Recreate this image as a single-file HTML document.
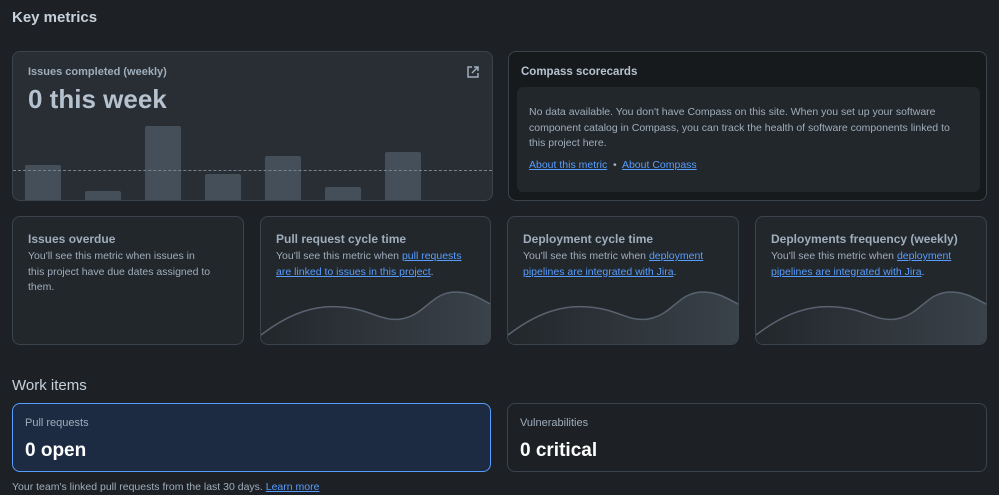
<!DOCTYPE html>
<html><head><style>
*{box-sizing:border-box;margin:0;padding:0}
body{width:999px;height:495px;background:#1d2125;font-family:"Liberation Sans",sans-serif;color:#b6c2cf;position:relative;overflow:hidden}
.a{position:absolute}
.card{position:absolute;border:1px solid #3b434c;border-radius:8px;background:#22272b;overflow:hidden}
h2{position:absolute;font-size:15px;font-weight:bold;color:#c7d1db}
.t{font-size:12px;font-weight:bold;color:#9fadbc;position:absolute}
.p{font-size:10.5px;line-height:15.5px;color:#9fadbc;position:absolute}
a{color:#579dff;text-decoration:underline}
.bar{position:absolute;background:#454f59;width:36px;bottom:0;border-radius:2px 2px 0 0}
</style></head><body>
<h2 style="left:12px;top:9px">Key metrics</h2>

<div class="card" style="left:12px;top:51px;width:481px;height:150px;background:#282e33">
 <div class="a" style="left:15px;top:14px;font-size:11px;font-weight:bold;color:#9fadbc">Issues completed (weekly)</div>
 <div class="a" style="left:15px;top:32px;font-size:26px;font-weight:bold;color:#b6c2cf">0 this week</div>
 <svg class="a" style="left:453px;top:13px" width="14" height="14" viewBox="0 0 14 14" fill="none" stroke="#9fadbc" stroke-width="1.5"><path d="M6 2H2v10h10V8M8 2h4v4M12 2L6 8"/></svg>
 <div class="bar" style="left:12px;height:35px"></div>
 <div class="bar" style="left:72px;height:9px"></div>
 <div class="bar" style="left:132px;height:74px"></div>
 <div class="bar" style="left:192px;height:26px"></div>
 <div class="bar" style="left:252px;height:44px"></div>
 <div class="bar" style="left:312px;height:13px"></div>
 <div class="bar" style="left:372px;height:48px"></div>
 <div class="a" style="left:0;right:0;top:118px;border-top:1px dashed #738496"></div>
</div>

<div class="card" style="left:508px;top:51px;width:479px;height:150px;background:#161a1d">
 <div class="t" style="left:12px;top:14px;font-size:11.5px;color:#b6c2cf">Compass scorecards</div>
 <div class="a" style="left:8px;top:35px;width:463px;height:105px;background:#22272b;border-radius:6px">
  <div class="p" style="left:12px;top:18px;width:440px">No data available. You don't have Compass on this site. When you set up your software component catalog in Compass, you can track the health of software components linked to this project here.</div>
  <div class="p" style="left:12px;top:71px"><a>About this metric</a> &nbsp;•&nbsp; <a>About Compass</a></div>
 </div>
</div>

<div class="card" style="left:12px;top:216px;width:232px;height:129px">
 <div class="t" style="left:15px;top:15px">Issues overdue</div>
 <div class="p" style="left:15px;top:32px;width:185px">You'll see this metric when issues in this project have due dates assigned to them.</div>
</div>

<div class="card" style="left:260px;top:216px;width:231px;height:129px">
 <div class="t" style="left:15px;top:15px">Pull request cycle time</div>
 <div class="p" style="left:15px;top:32px;width:195px">You'll see this metric when <a>pull requests are linked to issues in this project</a>.</div>
 <svg class="a" style="left:0;top:0" width="231" height="129"><defs><linearGradient id="g" x1="0" x2="1"><stop offset="0" stop-color="#22272b"/><stop offset="1" stop-color="#3a424a"/></linearGradient></defs><path d="M0 118C30 95 55 88 80 90C110 92 120 105 140 102C165 98 170 75 195 75C210 75 220 82 231 88V129H0Z" fill="url(#g)"/><path d="M0 118C30 95 55 88 80 90C110 92 120 105 140 102C165 98 170 75 195 75C210 75 220 82 231 88" fill="none" stroke="#596370" stroke-width="1.5"/></svg>
</div>

<div class="card" style="left:507px;top:216px;width:232px;height:129px">
 <div class="t" style="left:15px;top:15px">Deployment cycle time</div>
 <div class="p" style="left:15px;top:32px;width:205px">You'll see this metric when <a>deployment pipelines are integrated with Jira</a>.</div>
 <svg class="a" style="left:0;top:0" width="232" height="129"><path d="M0 118C30 95 55 88 80 90C110 92 120 105 140 102C165 98 170 75 195 75C210 75 220 82 232 88V129H0Z" fill="url(#g)"/><path d="M0 118C30 95 55 88 80 90C110 92 120 105 140 102C165 98 170 75 195 75C210 75 220 82 232 88" fill="none" stroke="#596370" stroke-width="1.5"/></svg>
</div>

<div class="card" style="left:755px;top:216px;width:232px;height:129px">
 <div class="t" style="left:15px;top:15px">Deployments frequency (weekly)</div>
 <div class="p" style="left:15px;top:32px;width:205px">You'll see this metric when <a>deployment pipelines are integrated with Jira</a>.</div>
 <svg class="a" style="left:0;top:0" width="232" height="129"><path d="M0 118C30 95 55 88 80 90C110 92 120 105 140 102C165 98 170 75 195 75C210 75 220 82 232 88V129H0Z" fill="url(#g)"/><path d="M0 118C30 95 55 88 80 90C110 92 120 105 140 102C165 98 170 75 195 75C210 75 220 82 232 88" fill="none" stroke="#596370" stroke-width="1.5"/></svg>
</div>

<h2 style="left:12px;top:377px;font-weight:normal;font-size:15px">Work items</h2>
<div class="card" style="left:12px;top:403px;width:479px;height:69px;background:#1c2b41;border-color:#579dff">
 <div class="a" style="left:12px;top:13px;font-size:11px;color:#9fadbc">Pull requests</div>
 <div class="a" style="left:12px;top:36px;font-size:19px;font-weight:bold;color:#fff">0 open</div>
</div>
<div class="card" style="left:507px;top:403px;width:480px;height:69px;background:#1d2125">
 <div class="a" style="left:12px;top:13px;font-size:11px;color:#9fadbc">Vulnerabilities</div>
 <div class="a" style="left:12px;top:36px;font-size:19px;font-weight:bold;color:#fff">0 critical</div>
</div>
<div class="a" style="left:12px;top:481px;font-size:10.5px;color:#9fadbc">Your team's linked pull requests from the last 30 days. <a>Learn more</a></div>
</body></html>
